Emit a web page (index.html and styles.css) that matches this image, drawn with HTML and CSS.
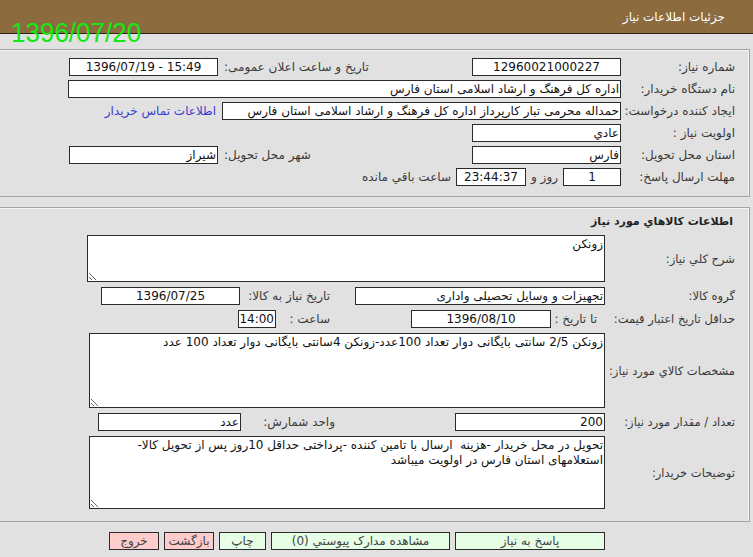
FILE: index.html
```html
<!DOCTYPE html>
<html lang="fa" dir="rtl">
<head>
<meta charset="utf-8">
<title>جزئیات اطلاعات نیاز</title>
<link rel="stylesheet" href="styles.css">
</head>
<body>
<div class="header">
  <div class="header-title">جزئیات اطلاعات نیاز</div>
  <div class="stamp" dir="ltr">1396/07/20</div>
</div>

<div class="panel panel-top">
  <div class="row">
    <div class="lbl w1">شماره نیاز:</div>
    <div class="box w149 center">12960021000227</div>
    <div class="spacer100"></div>
    <div class="lbl2">تاریخ و ساعت اعلان عمومی:</div>
    <div class="box w149 center" dir="ltr">1396/07/19 - 15:49</div>
  </div>
  <div class="row">
    <div class="lbl w1">نام دستگاه خریدار:</div>
    <div class="box w553">اداره کل فرهنگ و ارشاد اسلامی استان فارس</div>
  </div>
  <div class="row">
    <div class="lbl w1">ایجاد کننده درخواست:</div>
    <div class="box w399">حمداله محرمی تبار کارپرداز اداره کل فرهنگ و ارشاد اسلامی استان فارس</div>
    <a class="link" href="#">اطلاعات تماس خریدار</a>
  </div>
  <div class="row">
    <div class="lbl w1">اولویت نیاز :</div>
    <div class="box w149">عادي</div>
  </div>
  <div class="row">
    <div class="lbl w1">استان محل تحویل:</div>
    <div class="box w149">فارس</div>
    <div class="spacer100"></div>
    <div class="lbl2">شهر محل تحویل:</div>
    <div class="box w149">شیراز</div>
  </div>
  <div class="row">
    <div class="lbl w1">مهلت ارسال پاسخ:</div>
    <div class="box w58 center">1</div>
    <div class="txt">روز و</div>
    <div class="box w70 center">23:44:37</div>
    <div class="txt">ساعت باقي مانده</div>
  </div>
</div>

<div class="panel panel-bottom">
  <div class="section-title">اطلاعات کالاهاي مورد نیاز</div>
  <div class="rows">
    <div class="row ta-row">
      <div class="lbl w2">شرح کلي نیاز:</div>
      <textarea class="ta ta1" readonly>زونکن</textarea>
    </div>
    <div class="row">
      <div class="lbl w2">گروه کالا:</div>
      <div class="box w250">تجهیزات و وسایل تحصیلی واداری</div>
      <div class="lbl3 w115">تاریخ نیاز به کالا:</div>
      <div class="box w139 center">1396/07/25</div>
    </div>
    <div class="row">
      <div class="lbl w2">حداقل تاریخ اعتبار قیمت:</div>
      <div class="lbl4">تا تاریخ :</div>
      <div class="box w140 center">1396/08/10</div>
      <div class="lbl5">ساعت :</div>
      <div class="box w38 center">14:00</div>
    </div>
    <div class="row ta-row">
      <div class="lbl w2">مشخصات کالاي مورد نیاز:</div>
      <textarea class="ta ta2" readonly>زونکن 2/5 سانتی بایگانی دوار تعداد 100عدد-زونکن 4سانتی بایگانی دوار تعداد 100 عدد</textarea>
    </div>
    <div class="row">
      <div class="lbl w2">تعداد / مقدار مورد نیاز:</div>
      <div class="box w150">200</div>
      <div class="lbl3 w214">واحد شمارش:</div>
      <div class="box w143">عدد</div>
    </div>
    <div class="row ta-row">
      <div class="lbl w2">توضیحات خریدار:</div>
      <textarea class="ta ta3" readonly>تحویل در محل خریدار -هزینه  ارسال با تامین کننده -پرداختی حداقل 10روز پس از تحویل کالا-استعلامهای استان فارس در اولویت میباشد</textarea>
    </div>
  </div>
</div>

<div class="buttons">
  <button class="btn green b150">پاسخ به نیاز</button>
  <button class="btn green b179">مشاهده مدارک پیوستي (0)</button>
  <button class="btn green b47">چاپ</button>
  <button class="btn pink b50">بازگشت</button>
  <button class="btn pink b50">خروج</button>
</div>
</body>
</html>
```

FILE: styles.css
```css
html, body {
  margin: 0;
  padding: 0;
}
body {
  background: #e1e1e1;
  font-family: "DejaVu Sans", "Noto Sans", sans-serif;
  font-size: 12px;
  color: #3a3a3a;
  width: 753px;
  height: 557px;
  overflow: hidden;
}
.header {
  position: relative;
  height: 33px;
  background: #8c6b3f;
  border-bottom: 1px solid #2e2210;
  display: flex;
  align-items: center;
  padding-right: 28px;
}
.header-title {
  color: #ffffff;
  font-size: 12px;
}
.stamp {
  position: absolute;
  left: 11px;
  top: 14px;
  font-family: "Liberation Sans", Arial, sans-serif;
  font-size: 26px;
  color: #14e814;
  line-height: 36px;
  transform: scaleY(1.08);
}
.panel {
  margin-right: 3px;
  border: 1px solid #a3a3a3;
  border-left: 0;
  box-shadow: inset -1px 0 0 #f4f4f4, inset 0 1px 0 #f4f4f4;
}
.panel-top {
  margin-top: 15px;
  padding: 8px 14px 10px 0;
  display: flex;
  flex-direction: column;
  gap: 4px;
}
.panel-bottom {
  margin-top: 10px;
  padding: 0 14px 12px 0;
}
.row {
  display: flex;
  align-items: center;
  height: 18px;
  white-space: nowrap;
}
.lbl {
  flex: none;
  color: #3a3a3a;
}
.panel-bottom .lbl {
  font-size: 11.5px;
}
.w1 { width: 114px; }
.w2 { width: 130px; }
.box {
  flex: none;
  box-sizing: border-box;
  height: 18px;
  line-height: 16px;
  background: #fff;
  border: 1px solid #2a2a2a;
  padding: 0 1px;
  color: #111;
  overflow: hidden;
  white-space: nowrap;
  text-align: right;
}
.center { text-align: center; }
.w149 { width: 149px; }
.w553 { width: 553px; }
.w399 { width: 399px; }
.w58 { width: 58px; }
.w70 { width: 70px; }
.w250 { width: 250px; }
.w139 { width: 139px; }
.w140 { width: 140px; }
.w38 { width: 38px; }
.w150 { width: 150px; }
.w143 { width: 143px; }
.spacer100 { flex: none; width: 100px; }
.lbl2 {
  flex: none;
  width: 154px;
  text-align: left;
  padding-left: 6px;
  box-sizing: border-box;
}
.lbl3 {
  flex: none;
  box-sizing: border-box;
  padding-right: 25px;
}
.w115 { width: 115px; }
.w214 { width: 214px; padding-right: 120px; }
.lbl4 {
  flex: none;
  width: 54px;
  padding-right: 8px;
  box-sizing: border-box;
}
.lbl5 {
  flex: none;
  width: 135px;
  box-sizing: border-box;
  padding-right: 81px;
}
.txt {
  flex: none;
  padding: 0 5px;
}
.link {
  margin-right: 6px;
  color: #3b3bd0;
  text-decoration: none;
}
.section-title {
  height: 27px;
  line-height: 28px;
  font-weight: bold;
  font-size: 11px;
  color: #222;
  padding-right: 2px;
}
.rows {
  display: flex;
  flex-direction: column;
  gap: 5px;
}
.ta-row {
  height: auto;
}
.ta {
  flex: none;
  box-sizing: border-box;
  width: 518px;
  margin: 0;
  border: 1px solid #2a2a2a;
  background: #fff;
  font-family: "DejaVu Sans", "Noto Sans", sans-serif;
  font-size: 12px;
  color: #111;
  padding: 1px 1px;
  line-height: 15px;
  direction: rtl;
  white-space: pre-wrap;
  overflow: hidden;
}
.ta1 { height: 47px; width: 518px; }
.ta2 { height: 75px; width: 516px; }
.ta3 { height: 73px; width: 516px; }
.buttons {
  display: flex;
  gap: 5px;
  margin-top: 10px;
  padding-right: 148px;
}
.btn {
  flex: none;
  box-sizing: border-box;
  height: 18px;
  border: 1px solid #2a2a2a;
  font-family: "DejaVu Sans", "Noto Sans", sans-serif;
  font-size: 12px;
  color: #444;
  padding: 0;
  line-height: 16px;
}
.green { background: #e6fde6; }
.pink { background: #ffcccc; }
.b150 { width: 150px; }
.b179 { width: 179px; }
.b47 { width: 47px; }
.b50 { width: 50px; }
```
